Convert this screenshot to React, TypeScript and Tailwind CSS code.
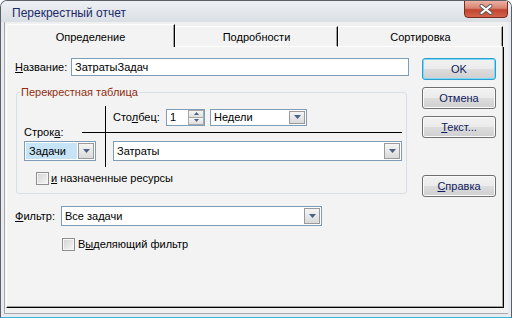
import React from 'react';

function Arrow() {
  return (
    <svg width="7" height="4" viewBox="0 0 7 4">
      <path d="M0 0H7L3.5 4Z" fill="#4d6185" />
    </svg>
  );
}

function DropBtn() {
  return (
    <div className="my-[1px] mr-[1px] flex w-[16px] shrink-0 items-center justify-center border border-[#9a9a9a] bg-[linear-gradient(#f5f5f5,#dadada)]">
      <Arrow />
    </div>
  );
}

function Combo({ text, className, fieldClass }: { text: string; className: string; fieldClass?: string }) {
  return (
    <div className={`flex border border-[#7f9db9] bg-white ${className}`}>
      <div className={`flex flex-1 items-center pl-[3px] ${fieldClass ?? ''}`}>{text}</div>
      <DropBtn />
    </div>
  );
}

function Check() {
  return (
    <div className="h-[13px] w-[13px] shrink-0 border border-[#8e8f8f] bg-[linear-gradient(135deg,#d2d2d2,#f8f8f8)] shadow-[inset_0_0_0_1px_#f6f6f6]" />
  );
}

function Btn({ children, def }: { children: React.ReactNode; def?: boolean }) {
  return (
    <div
      className={
        def
          ? 'flex h-[22px] w-[74px] items-center justify-center rounded-[3px] border border-[#2b9fd0] bg-[linear-gradient(#f2f2f2_0%,#ebebeb_50%,#dddddd_50%,#cfcfcf_100%)] text-[#101a5e] shadow-[inset_0_0_0_1px_#7fd8f8]'
          : 'flex h-[22px] w-[74px] items-center justify-center rounded-[3px] border border-[#707070] bg-[linear-gradient(#f2f2f2_0%,#ebebeb_50%,#dddddd_50%,#cfcfcf_100%)] text-[#101a5e] shadow-[inset_0_0_0_1px_#fbfbfb]'
      }
    >
      {children}
    </div>
  );
}

function Spin() {
  return (
    <div className="flex h-[17px] w-[39px] border border-[#7f9db9] bg-white">
      <div className="flex flex-1 items-center pl-[3px]">1</div>
      <div className="flex w-[16px] flex-col">
        <div className="flex flex-1 items-center justify-center border border-[#a8a8a8] bg-[linear-gradient(#f6f6f6,#dedede)]">
          <svg width="5" height="3" viewBox="0 0 5 3">
            <path d="M0 3H5L2.5 0Z" fill="#4d6185" />
          </svg>
        </div>
        <div className="flex flex-1 items-center justify-center border border-t-0 border-[#a8a8a8] bg-[linear-gradient(#f6f6f6,#dedede)]">
          <svg width="5" height="3" viewBox="0 0 5 3">
            <path d="M0 0H5L2.5 3Z" fill="#4d6185" />
          </svg>
        </div>
      </div>
    </div>
  );
}

export default function App() {
  return (
    <div className="flex h-[318px] w-[512px] flex-col overflow-hidden rounded-t-[7px] border border-[#5c6066] border-b-[#35b5d8] bg-[#e7eaee] font-['Liberation_Sans',Arial,sans-serif] text-[11px] leading-[13px] text-black">
      {/* Title bar */}
      <div className="flex h-[21px] shrink-0 bg-[linear-gradient(#eef1f4,#dadfe5)]">
        <div className="pl-[11px] pt-[5px] text-[12px] leading-[14px] text-[#1a2866]">Перекрестный отчет</div>
        <div className="ml-auto mr-[3px] -mt-px flex h-[18px] w-[44px] items-center justify-center rounded-b-[4px] border border-[#7a2a1e] bg-[linear-gradient(#ebb3a6_0%,#d98270_45%,#c2442e_55%,#d2644d_100%)]">
          <svg width="16" height="11" viewBox="0 0 16 11">
            <path d="M3.5 2L12.5 9M12.5 2L3.5 9" stroke="#5a5a5a" strokeWidth="4" strokeLinecap="round" />
            <path d="M3.5 2L12.5 9M12.5 2L3.5 9" stroke="#ffffff" strokeWidth="2.2" strokeLinecap="round" />
          </svg>
        </div>
      </div>

      {/* Client */}
      <div className="mx-[3px] mb-[3px] flex flex-1 flex-col border-b border-l border-[#a5a9ad] bg-[#f0f0f0] pl-[1px] pr-[4px] pt-[2px]">
        {/* Tabs */}
        <div className="flex h-[23px] items-end">
          <div className="flex h-[23px] w-[169px] justify-center rounded-tl-[2px] border-l border-t border-r border-white border-r-black bg-[#f3f3f3] pt-[6px] shadow-[inset_-1px_0_0_#a0a0a0]">
            Определение
          </div>
          <div className="flex h-[21px] w-[163px] justify-center rounded-tl-[2px] border-b border-l border-t border-r border-white border-r-black bg-[#f3f3f3] pt-[4px] shadow-[inset_-1px_0_0_#a0a0a0]">
            Подробности
          </div>
          <div className="flex h-[21px] w-[165px] justify-center rounded-tl-[2px] border-b border-l border-t border-r border-white border-r-black bg-[#f3f3f3] pt-[4px] shadow-[inset_-1px_0_0_#a0a0a0]">
            Сортировка
          </div>
        </div>

        {/* Panel */}
        <div className="flex h-[261px] gap-[13px] border-b border-l border-r border-white border-b-black border-r-black bg-[#f3f3f3] pl-[8px] pr-[6px] pt-[11px] shadow-[inset_-1px_-1px_0_#a0a0a0]">
          {/* Left column */}
          <div className="flex w-[394px] flex-col">
            <div className="flex h-[18px] items-center">
              <span className="w-[56px]">
                <u>Н</u>азвание:
              </span>
              <div className="flex h-[18px] w-[338px] items-center border border-[#7f9db9] bg-white pl-[3px]">ЗатратыЗадач</div>
            </div>

            <fieldset className="ml-[1px] mt-[10px] w-[391px] rounded-[3px] border border-[#d5dfe5] pb-[8px] pr-[4px]">
              <legend className="ml-[3px] px-[1px] leading-[13px] text-[#922c0e]">Перекрестная таблица</legend>
              <div className="mt-[7px] grid grid-cols-[88px_1fr] grid-rows-[21px_10px_30px]">
                <div />
                <div className="flex items-center border-l border-black pl-[7px] pt-[1px]">
                  <span className="w-[53px]">
                    Сто<u>л</u>бец:
                  </span>
                  <Spin />
                  <Combo text="Недели" className="ml-[5px] h-[17px] w-[97px]" />
                </div>
                <div className="flex items-center pl-[7px]">
                  <span className="w-[58px] leading-[10px]">
                    Строк<u>а</u>:
                  </span>
                  <div className="h-px flex-1 bg-black" />
                </div>
                <div className="flex items-center border-l border-black">
                  <div className="h-px flex-1 bg-black" />
                </div>
                <div className="pl-[7px] pt-[4px]">
                  <Combo text="Задачи" className="h-[20px] w-[72px]" fieldClass="m-[1px] bg-[#c6e4f6]" />
                </div>
                <div className="border-l border-black pl-[7px] pt-[4px]">
                  <Combo text="Затраты" className="h-[20px] w-full" />
                </div>
              </div>
              <div className="mt-[5px] flex h-[13px] items-center pl-[19px]">
                <Check />
                <span className="ml-[2px]">
                  <u>и</u> назначенные ресурсы
                </span>
              </div>
            </fieldset>

            <div className="mt-[12px] flex h-[20px] items-center">
              <span className="w-[46px]">
                <u>Ф</u>ильтр:
              </span>
              <Combo text="Все задачи" className="h-[20px] w-[261px]" />
            </div>

            <div className="mt-[12px] flex h-[13px] items-center pl-[47px]">
              <Check />
              <span className="ml-[3px]">
                В<u>ы</u>деляющий фильтр
              </span>
            </div>
          </div>

          {/* Right column */}
          <div className="flex w-[74px] flex-col">
            <Btn def>OK</Btn>
            <div className="mt-[7px]">
              <Btn>Отмена</Btn>
            </div>
            <div className="mt-[7px]">
              <Btn>
                <span>
                  <u>Т</u>екст...
                </span>
              </Btn>
            </div>
            <div className="mt-[37px]">
              <Btn>
                <span>
                  <u>С</u>правка
                </span>
              </Btn>
            </div>
          </div>
        </div>
      </div>
    </div>
  );
}
